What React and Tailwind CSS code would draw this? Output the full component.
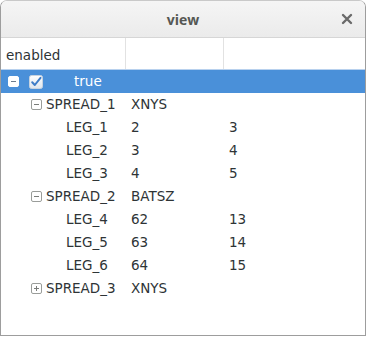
import React from "react";

const font = { fontFamily: '"DejaVu Sans", "Open Sans", sans-serif' };

function Expander({ open, inverted }) {
  return (
    <svg width="11" height="11" viewBox="0 0 11 11" className="shrink-0">
      <rect x="0.5" y="0.5" width="10" height="10" rx="1.5" fill="#ffffff" stroke={inverted ? "#ffffff" : "#9a9d9a"} />
      <line x1="3" y1="5.5" x2="8" y2="5.5" stroke={inverted ? "#6d7c8c" : "#7a7d7a"} strokeWidth="1" />
      {!open && <line x1="5.5" y1="3" x2="5.5" y2="8" stroke="#7a7d7a" strokeWidth="1" />}
    </svg>
  );
}

function Check() {
  return (
    <svg width="14" height="14" viewBox="0 0 14 14" className="shrink-0">
      <defs>
        <linearGradient id="cbg" x1="0" y1="0" x2="0" y2="1">
          <stop offset="0" stopColor="#ffffff" />
          <stop offset="1" stopColor="#dfe6ee" />
        </linearGradient>
      </defs>
      <rect x="0.5" y="0.5" width="13" height="13" rx="2" fill="url(#cbg)" stroke="#c8d3df" />
      <path d="M3.2 7.2 L5.8 10 L11.5 2.8" fill="none" stroke="#3f7dc7" strokeWidth="2" strokeLinecap="round" strokeLinejoin="round" />
    </svg>
  );
}

function Row({ c1, c2, c3, selected }) {
  return (
    <div className={"flex h-[23px] items-center text-[13.5px] " + (selected ? "bg-[#4a90d9] text-white" : "text-[#2e3436]")}>
      <div className="w-[126px] flex items-center h-full whitespace-nowrap">{c1}</div>
      <div className="w-[98px] pl-[4px]">{c2}</div>
      <div className="flex-1 pl-[4px]">{c3}</div>
    </div>
  );
}

export default function App() {
  const spread = (name, open) => (
    <div className="flex items-center pl-[30px] gap-[4px]">
      <Expander open={open} />
      <span>{name}</span>
    </div>
  );
  const leg = (name) => <span className="pl-[65px]">{name}</span>;
  return (
    <div className="w-[367px] h-[337px] bg-white" style={font}>
      <div className="w-[366px] h-[336px] border border-[#9d9d9d] border-t-[#c9c9c9] rounded-t-[7px] overflow-hidden flex flex-col bg-white">
        <div className="h-[37px] shrink-0 flex items-center justify-center relative bg-gradient-to-b from-[#f5f5f5] to-[#ebebeb] border-b border-[#d6d6d6]">
          <span className="text-[14px] font-bold text-[#555753]" style={{ fontFamily: '"Open Sans", sans-serif' }}>view</span>
          <svg width="12" height="12" viewBox="0 0 12 12" className="absolute right-[12px] top-[12px]">
            <path d="M2 2 L10 10 M10 2 L2 10" stroke="#6a6a6a" strokeWidth="2.4" strokeLinecap="round" />
          </svg>
        </div>
        <div className="h-[32px] shrink-0 flex border-b border-[#b8d1ee] text-[13.5px] text-[#2e3436]">
          <div className="w-[125px] pl-[5px] pt-[3px] flex items-center border-r border-[#e2e2e2]">enabled</div>
          <div className="w-[98px] border-r border-[#e2e2e2]"></div>
          <div className="flex-1"></div>
        </div>
        <div className="flex flex-col">
          <Row
            selected
            c1={
              <div className="flex items-center pl-[7px] w-full">
                <Expander open inverted />
                <span className="ml-[10px]"><Check /></span>
                <span className="ml-[31px]">true</span>
              </div>
            }
          />
          <Row c1={spread("SPREAD_1", true)} c2="XNYS" />
          <Row c1={leg("LEG_1")} c2="2" c3="3" />
          <Row c1={leg("LEG_2")} c2="3" c3="4" />
          <Row c1={leg("LEG_3")} c2="4" c3="5" />
          <Row c1={spread("SPREAD_2", true)} c2="BATSZ" />
          <Row c1={leg("LEG_4")} c2="62" c3="13" />
          <Row c1={leg("LEG_5")} c2="63" c3="14" />
          <Row c1={leg("LEG_6")} c2="64" c3="15" />
          <Row c1={spread("SPREAD_3", false)} c2="XNYS" />
        </div>
      </div>
    </div>
  );
}
